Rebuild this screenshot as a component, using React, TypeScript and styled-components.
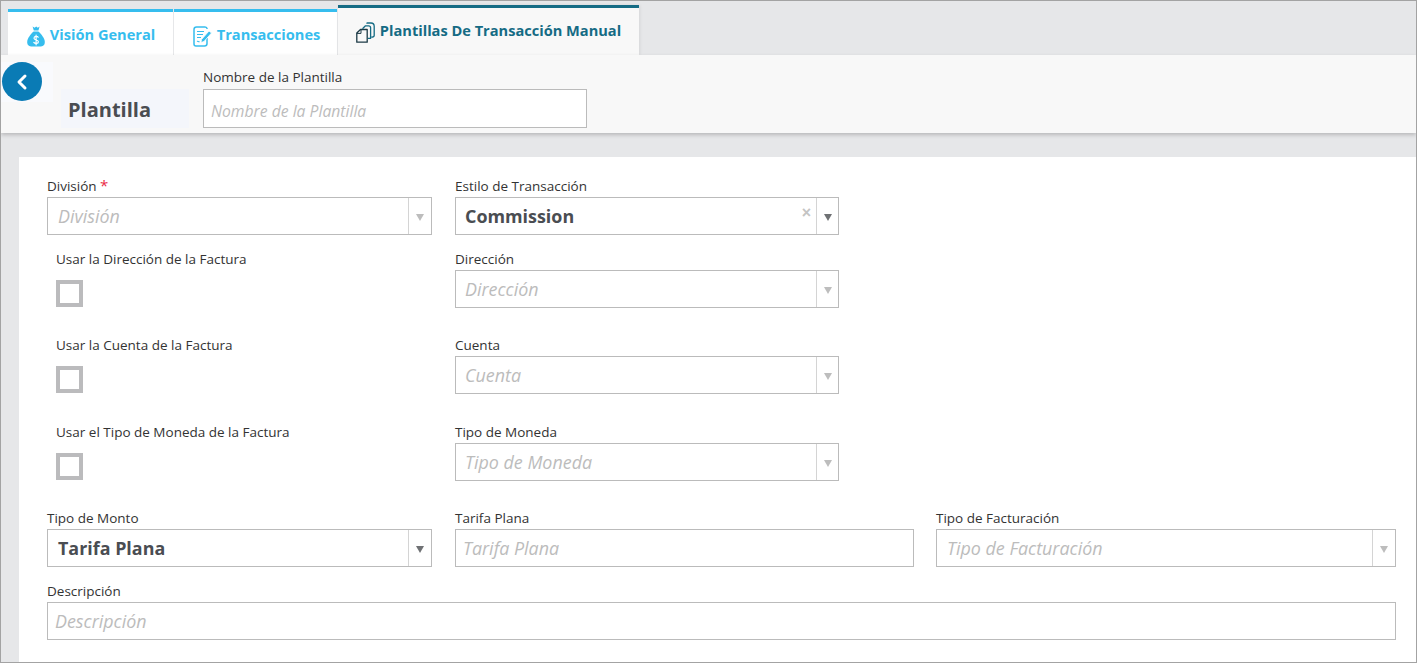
import React from "react";
import styled, { createGlobalStyle } from "styled-components";

const Global = createGlobalStyle`
  html, body { margin: 0; padding: 0; height: 100%; }
  body { font-family: "Open Sans", "Liberation Sans", sans-serif; background: #e6e7e9; }
  * { box-sizing: border-box; }
`;

const Page = styled.div`
  width: 1417px;
  height: 663px;
  border: 1px solid #a3a3a3;
  background: #e6e7e9;
  display: flex;
  flex-direction: column;
  overflow: hidden;
`;

const TabBar = styled.div`
  height: 54px;
  display: flex;
  align-items: flex-end;
  padding-left: 7px;
  gap: 1px;
`;

const Tab = styled.div<{ $active?: boolean; $w: number; $shift?: number }>`
  width: ${(p) => p.$w}px;
  height: ${(p) => (p.$active ? 50 : 46)}px;
  background: ${(p) => (p.$active ? "#f8f8f8" : "#fff")};
  border-top: 3px solid ${(p) => (p.$active ? "#156b84" : "#36bdee")};
  color: ${(p) => (p.$active ? "#156b84" : "#36bdee")};
  font-size: 14.6px;
  font-weight: 700;
  display: flex;
  align-items: center;
  justify-content: center;
  gap: 5px;
  padding-bottom: ${(p) => (p.$active ? 4 : 0)}px;
  padding-left: ${(p) => p.$shift ?? 0}px;
  box-shadow: ${(p) => (p.$active ? "1px 0 3px rgba(0,0,0,.08)" : "none")};
`;

const TabIcon = styled.span`
  display: flex;
  margin-top: 6px;
`;

const TabText = styled.span`
  white-space: nowrap;
`;

const HeaderPanel = styled.div`
  height: 78px;
  background: #f8f8f8;
  box-shadow: 0 2px 4px rgba(0, 0, 0, 0.2);
  display: flex;
  align-items: flex-start;
  position: relative;
`;

const BackWrap = styled.div`
  width: 52px;
  height: 40px;
  margin-top: 7px;
  padding-left: 1px;
  background: #f9fafd;
`;

const BackButton = styled.button`
  width: 40px;
  height: 39px;
  border: 0;
  padding: 0;
  border-radius: 50%;
  background: #0a7bb5;
  display: flex;
  align-items: center;
  justify-content: center;
`;

const TitleBox = styled.div`
  width: 128px;
  height: 39px;
  margin: 34px 0 0 8px;
  padding-left: 7px;
  background: #f4f6fb;
  color: #4a4d52;
  font-size: 20px;
  font-weight: 700;
  line-height: 42px;
`;

const HeaderField = styled.div`
  width: 384px;
  margin: 13px 0 0 14px;
`;

const Form = styled.div`
  margin: 24px 0 0 18px;
  flex: 1;
  background: #fff;
  padding: 20px 20px 0 28px;
  display: flex;
  flex-direction: column;
`;

const Row = styled.div<{ $top?: number }>`
  display: flex;
  margin-top: ${(p) => p.$top ?? 0}px;
`;

const Field = styled.div<{ $w?: number; $ml?: number; $grow?: boolean }>`
  width: ${(p) => (p.$w ? `${p.$w}px` : "auto")};
  margin-left: ${(p) => p.$ml ?? 0}px;
  flex: ${(p) => (p.$grow ? 1 : "none")};
`;

const Label = styled.div`
  height: 20px;
  font-size: 13.5px;
  line-height: 18px;
  color: #333;
  white-space: nowrap;
`;

const Star = styled.span`
  color: #ea2a45;
  font-size: 15px;
  line-height: 0;
`;

const Box = styled.div`
  height: 38px;
  border: 1px solid #bbb;
  background: #fff;
  display: flex;
  align-items: center;
`;

const HeaderBox = styled(Box)`
  height: 39px;
  margin-top: 1px;
`;

const Placeholder = styled.div<{ $pad?: number }>`
  flex: 1;
  padding-left: ${(p) => p.$pad ?? 7}px;
  font-style: italic;
  font-size: 17.9px;
  color: #bcbcbc;
  white-space: nowrap;
`;

const HeaderPlaceholder = styled(Placeholder)`
  font-size: 15.7px;
  padding-top: 4px;
`;

const Value = styled.div<{ $pad?: number }>`
  flex: 1;
  padding-left: ${(p) => p.$pad ?? 9}px;
  font-weight: 700;
  font-size: 17.9px;
  color: #4a4d52;
  white-space: nowrap;
`;

const Clear = styled.span`
  color: #c4c4c4;
  font-size: 16px;
  line-height: 16px;
  margin: -6px 5px 0 0;
  font-family: "Liberation Sans", sans-serif;
  font-weight: 700;
`;

const Arrow = styled.div<{ $on?: boolean; $w: number }>`
  width: ${(p) => p.$w}px;
  height: 100%;
  border-left: 1px solid #d4d4d4;
  display: flex;
  align-items: center;
  justify-content: center;
  &::after {
    content: "";
    border-left: 4px solid transparent;
    border-right: 4px solid transparent;
    border-top: 7px solid ${(p) => (p.$on ? "#6f7174" : "#bdbdbd")};
    margin-top: 2px;
  }
`;

const CheckCol = styled.div`
  width: 408px;
  padding-left: 9px;
  flex: none;
`;

const CheckLabel = styled(Label)`
  height: 22px;
`;

const Check = styled.div`
  width: 27px;
  height: 27px;
  border: 4px solid #bbbbbd;
  background: #fff;
  margin-top: 8px;
`;

function Select({
  text,
  value,
  clear,
  arrow = 23,
  pad = 10,
}: {
  text?: string;
  value?: string;
  clear?: boolean;
  arrow?: number;
  pad?: number;
}) {
  return (
    <Box>
      {value ? <Value $pad={pad}>{value}</Value> : <Placeholder $pad={pad}>{text}</Placeholder>}
      {clear && <Clear>×</Clear>}
      <Arrow $on={!!value} $w={arrow} />
    </Box>
  );
}

const BagIcon = () => (
  <svg width="18" height="21" viewBox="0 0 18 21" fill="none">
    <path d="M5.6 .6 L7.6 1.8 L9.2 .4 L10.8 1.8 L12.6 .6 L11.4 4.6 H6.8 Z" fill="#36bdee" />
    <path d="M6.6 5.6 H11.4 C14.4 8.4 17.8 12.4 17.8 16 C17.8 19.4 15.6 20.6 13 20.6 H5 C2.4 20.6 .2 19.4 .2 16 C.2 12.4 3.6 8.4 6.6 5.6 Z" fill="#36bdee" />
    <path d="M11.2 11.2 C10.6 10.2 7 9.8 7 12.2 C7 14.4 11.4 13.6 11.4 15.8 C11.4 18 7.6 17.8 6.8 16.4 M9.1 9.2 V18.8" stroke="#fff" strokeWidth="1.2" strokeLinecap="round" />
  </svg>
);

const NoteIcon = () => (
  <svg width="19" height="21" viewBox="0 0 19 21" fill="none">
    <path d="M14.2 3 C14 1.6 13.2 1 12 1 H3.5 C2 1 1 2 1 3.5 V18 C1 19.2 2 20 3 20 H11.5 C13 20 14 19 14 17.5 V12" stroke="#36bdee" strokeWidth="1.5" />
    <path d="M4 5.5 H11 M4 8.5 H10 M4 11.5 H8 M4 15.5 C5 14.5 5.5 16.5 6.5 15.5" stroke="#36bdee" strokeWidth="1.1" />
    <path d="M8.5 13.5 L16 5 L18.5 7 L11 15.5 L8 16.5 Z" fill="#36bdee" stroke="#fff" strokeWidth=".8" />
  </svg>
);

const CopyIcon = () => (
  <svg width="19" height="21" viewBox="0 0 19 21" fill="none">
    <path d="M.8 11 L4.5 7.5 H11.2 V20.2 H.8 Z" fill="#f8f8f8" stroke="#1c3a46" strokeWidth="1.3" strokeLinejoin="round" />
    <path d="M.8 11.4 H5 V7.5" stroke="#1c3a46" strokeWidth="1" />
    <path d="M6.5 6.8 L9.5 3.8 H12.6 C13.8 3.8 14.6 4.6 14.6 5.8 V16.4 H11.8" stroke="#156b84" strokeWidth="1.3" strokeLinejoin="round" />
    <path d="M10.5 1.6 L11.2 1 H15 C17 1 18.2 2.2 18.2 4.2 V13.4 C18.2 14.6 17.2 15.2 15.2 15.2" stroke="#156b84" strokeWidth="1.3" strokeLinejoin="round" />
  </svg>
);

export default function App() {
  return (
    <Page>
      <Global />
      <TabBar>
        <Tab $w={165} $shift={1}>
          <TabIcon><BagIcon /></TabIcon>
          <TabText>Visión General</TabText>
        </Tab>
        <Tab $w={163} $shift={2}>
          <TabIcon><NoteIcon /></TabIcon>
          <TabText>Transacciones</TabText>
        </Tab>
        <Tab $w={301} $active>
          <TabIcon><CopyIcon /></TabIcon>
          <TabText>Plantillas De Transacción Manual</TabText>
        </Tab>
      </TabBar>
      <HeaderPanel>
        <BackWrap>
          <BackButton aria-label="Volver">
            <svg width="14" height="18" viewBox="0 0 14 18" fill="none">
              <path d="M10 3 L4 9 L10 15" stroke="#fff" strokeWidth="3" strokeLinecap="round" strokeLinejoin="round" />
            </svg>
          </BackButton>
        </BackWrap>
        <TitleBox>Plantilla</TitleBox>
        <HeaderField>
          <Label>Nombre de la Plantilla</Label>
          <HeaderBox>
            <HeaderPlaceholder>Nombre de la Plantilla</HeaderPlaceholder>
          </HeaderBox>
        </HeaderField>
      </HeaderPanel>
      <Form>
        <Row>
          <Field $w={385}>
            <Label>
              División <Star>*</Star>
            </Label>
            <Select text="División" />
          </Field>
          <Field $w={384} $ml={23}>
            <Label>Estilo de Transacción</Label>
            <Select value="Commission" clear arrow={22} pad={9} />
          </Field>
        </Row>
        <Row $top={15}>
          <CheckCol>
            <CheckLabel>Usar la Dirección de la Factura</CheckLabel>
            <Check />
          </CheckCol>
          <Field $w={384}>
            <Label>Dirección</Label>
            <Select text="Dirección" arrow={22} pad={9} />
          </Field>
        </Row>
        <Row $top={28}>
          <CheckCol>
            <CheckLabel>Usar la Cuenta de la Factura</CheckLabel>
            <Check />
          </CheckCol>
          <Field $w={384}>
            <Label>Cuenta</Label>
            <Select text="Cuenta" arrow={22} pad={9} />
          </Field>
        </Row>
        <Row $top={29}>
          <CheckCol>
            <CheckLabel>Usar el Tipo de Moneda de la Factura</CheckLabel>
            <Check />
          </CheckCol>
          <Field $w={384}>
            <Label>Tipo de Moneda</Label>
            <Select text="Tipo de Moneda" arrow={22} pad={9} />
          </Field>
        </Row>
        <Row $top={28}>
          <Field $w={385}>
            <Label>Tipo de Monto</Label>
            <Select value="Tarifa Plana" />
          </Field>
          <Field $w={459} $ml={23}>
            <Label>Tarifa Plana</Label>
            <Box>
              <Placeholder>Tarifa Plana</Placeholder>
            </Box>
          </Field>
          <Field $w={460} $ml={22}>
            <Label>Tipo de Facturación</Label>
            <Select text="Tipo de Facturación" />
          </Field>
        </Row>
        <Row $top={15}>
          <Field $grow>
            <Label>Descripción</Label>
            <Box>
              <Placeholder>Descripción</Placeholder>
            </Box>
          </Field>
        </Row>
      </Form>
    </Page>
  );
}
